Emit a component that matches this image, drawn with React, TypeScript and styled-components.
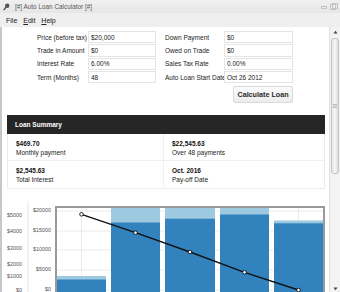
import React from "react";
import styled, { createGlobalStyle } from "styled-components";

const Global = createGlobalStyle`
  html, body { margin: 0; padding: 0; background: #fff; }
  body { font-family: "Liberation Sans", Arial, sans-serif; }
  * { box-sizing: border-box; }
`;

const Window = styled.div`
  width: 340px;
  height: 292px;
  display: flex;
  flex-direction: column;
  overflow: hidden;
  background: #ececec;
`;

const TitleBar = styled.div`
  height: 13px;
  display: flex;
  align-items: center;
  padding: 0 2px 0 3px;
  gap: 5px;
  background: linear-gradient(#f0f0f0, #e6e6e6);
  color: #5a5a5a;
  font-size: 6.4px;
`;

const TitleText = styled.span`
  flex: 1;
  white-space: nowrap;
`;

const TitleButtons = styled.div`
  display: flex;
  align-items: center;
  gap: 3px;
`;

const MenuBar = styled.div`
  height: 14px;
  display: flex;
  align-items: center;
  gap: 6px;
  padding-left: 6px;
  background: #efefef;
  font-size: 7px;
  color: #222;
`;

const MenuItem = styled.span`
  u { text-decoration: underline; }
`;

const Body = styled.div`
  flex: 1;
  display: flex;
  border-left: 2px solid #c6c9cc;
  min-height: 0;
`;

const Content = styled.div`
  flex: 1;
  background: #fff;
  display: flex;
  flex-direction: column;
  overflow: hidden;
`;

const Form = styled.div`
  display: flex;
  gap: 9px;
  padding: 4px 0 0 35px;
`;

const FieldColumn = styled.div<{ $label: number; $input: number }>`
  display: grid;
  grid-template-columns: ${(p) => p.$label}px ${(p) => p.$input}px;
  grid-auto-rows: 12.33px;
  row-gap: 1px;
  align-items: center;
`;

const Label = styled.span`
  font-size: 6.5px;
  color: #222;
  white-space: nowrap;
`;

const Field = styled.div`
  height: 100%;
  border: 1px solid #e4e4e4;
  background: #fff;
  font-size: 6.5px;
  color: #222;
  display: flex;
  align-items: center;
  padding-left: 2px;
`;

const ButtonRow = styled.div`
  display: flex;
  justify-content: flex-end;
  padding-right: 36px;
  margin-top: 2.7px;
`;

const CalcButton = styled.div`
  width: 60px;
  height: 17px;
  display: flex;
  align-items: center;
  justify-content: center;
  font-size: 7.2px;
  font-weight: bold;
  color: #2a2a2a;
  background: linear-gradient(#fbfbfb, #ececec);
  border: 1px solid #dadada;
  border-radius: 2px;
`;

const Summary = styled.div`
  margin: 12px 4px 0 5px;
`;

const SummaryHeader = styled.div`
  height: 19px;
  background: #262626;
  color: #fff;
  font-weight: bold;
  font-size: 6.5px;
  display: flex;
  align-items: center;
  padding-left: 8px;
`;

const SummaryGrid = styled.div`
  display: grid;
  grid-template-columns: 155px 1fr;
  grid-auto-rows: 26.8px;
  border: 1px solid #ececec;
  border-top: none;
`;

const Cell = styled.div<{ $right?: boolean; $bottom?: boolean }>`
  padding: 5px 8px 0;
  border-left: ${(p) => (p.$right ? "1px solid #f0f0f0" : "none")};
  border-bottom: ${(p) => (p.$bottom ? "1px solid #f0f0f0" : "none")};
  display: flex;
  flex-direction: column;
`;

const Value = styled.span`
  font-size: 6.5px;
  font-weight: bold;
  line-height: 9px;
  color: #111;
`;

const Caption = styled.span`
  font-size: 6.5px;
  line-height: 9px;
  color: #222;
`;

const ChartBox = styled.div`
  margin-top: 12px;
  height: 92px;
`;

const Scrollbar = styled.div`
  width: 11px;
  background: #f3f3f3;
  border-left: 1px solid #e0e0e0;
  display: flex;
  flex-direction: column;
  align-items: center;
  padding-top: 2px;
`;

const Arrow = styled.div`
  height: 6px;
  display: flex;
  align-items: center;
  justify-content: center;
`;

const Thumb = styled.div`
  width: 8px;
  height: 136px;
  margin-top: 3px;
  border: 1px solid #c4c4c4;
  border-radius: 3px;
  background: linear-gradient(90deg, #e6e6e6, #f6f6f6 50%, #dcdcdc);
  display: flex;
  align-items: center;
  justify-content: center;
`;

const Spacer = styled.div`
  flex: 1;
`;

const leftFields = [
  ["Price (before tax)", "$20,000"],
  ["Trade in Amount", "$0"],
  ["Interest Rate", "6.00%"],
  ["Term (Months)", "48"],
];
const rightFields = [
  ["Down Payment", "$0"],
  ["Owed on Trade", "$0"],
  ["Sales Tax Rate", "0.00%"],
  ["Auto Loan Start Date", "Oct 26 2012"],
];

const bars = [
  { x: 57, w: 49, light: 275, dark: 278.5 },
  { x: 111, w: 49, light: 207, dark: 221.5 },
  { x: 165, w: 50, light: 207, dark: 217.7 },
  { x: 220, w: 49, light: 207, dark: 213.5 },
  { x: 274, w: 49, light: 219.5, dark: 222.3 },
];
const points: [number, number][] = [
  [81.5, 213.3],
  [135.5, 231.7],
  [190, 251],
  [244.5, 271.3],
  [298.5, 289],
];
const rightAxis: [string, number][] = [
  ["$20000", 210],
  ["$15000", 230],
  ["$10000", 249],
  ["$5000", 269],
  ["$0", 289],
];
const leftAxis: [string, number][] = [
  ["$5000", 215],
  ["$4000", 231],
  ["$3000", 248],
  ["$2000", 264],
  ["$1000", 276],
  ["$0", 290],
];

const Chart = () => (
  <svg width="327" height="92" viewBox="2 200 327 92" style={{ display: "block" }}>
    <line x1="28" y1="200" x2="28" y2="292" stroke="#e4e4e4" strokeWidth="1" />
    {leftAxis.map(([t, y]) => (
      <text key={t} x="22" y={y} fontSize="5.4" fill="#555" textAnchor="end" dominantBaseline="middle" fontFamily="Liberation Sans, Arial, sans-serif">
        {t}
      </text>
    ))}
    {rightAxis.map(([t, y]) => (
      <text key={t} x="51" y={y} fontSize="5.4" fill="#555" textAnchor="end" dominantBaseline="middle" fontFamily="Liberation Sans, Arial, sans-serif">
        {t}
      </text>
    ))}
    {rightAxis.map(([t, y]) => (
      <line key={"g" + t} x1="57" y1={y} x2="323" y2={y} stroke="#e6e6e6" strokeWidth="0.8" />
    ))}
    {points.map(([x]) => (
      <line key={"v" + x} x1={x} y1="206" x2={x} y2="292" stroke="#e6e6e6" strokeWidth="0.8" />
    ))}
    {bars.map((b) => (
      <g key={b.x}>
        <rect x={b.x} y={b.light} width={b.w} height={292 - b.light} fill="#9ecae1" />
        <rect x={b.x} y={b.dark} width={b.w} height={292 - b.dark} fill="#3182bd" />
      </g>
    ))}
    <path d="M56 292 V206 H324 V292" fill="none" stroke="#9a9a9a" strokeWidth="2" />
    <polyline points={points.map((p) => p.join(",")).join(" ")} fill="none" stroke="#111" strokeWidth="1.4" />
    {points.map(([x, y]) => (
      <circle key={"c" + x} cx={x} cy={y} r="1.8" fill="#fff" stroke="#111" strokeWidth="0.9" />
    ))}
  </svg>
);

export default function App() {
  return (
    <>
      <Global />
      <Window>
        <TitleBar>
          <svg width="7" height="8" viewBox="0 0 7 8">
            <circle cx="4.2" cy="2.8" r="2.2" fill="#555" />
            <path d="M3 4 L0.8 7.2" stroke="#555" strokeWidth="1.4" />
          </svg>
          <TitleText>[#] Auto Loan Calculator [#]</TitleText>
          <TitleButtons>
            <svg width="6" height="6" viewBox="0 0 6 6">
              <rect x="0.5" y="2.5" width="5" height="2" fill="none" stroke="#bbb" strokeWidth="0.8" />
            </svg>
            <svg width="8" height="7" viewBox="0 0 8 7">
              <rect x="0.5" y="1.5" width="5" height="5" fill="none" stroke="#bbb" strokeWidth="0.8" />
              <rect x="2.5" y="0.5" width="5" height="5" fill="none" stroke="#bbb" strokeWidth="0.8" />
            </svg>
          </TitleButtons>
        </TitleBar>
        <MenuBar>
          <MenuItem>File</MenuItem>
          <MenuItem>
            <u>E</u>dit
          </MenuItem>
          <MenuItem>
            <u>H</u>elp
          </MenuItem>
        </MenuBar>
        <Body>
          <Content>
            <Form>
              <FieldColumn $label={51} $input={68}>
                {leftFields.map(([l, v]) => (
                  <React.Fragment key={l}>
                    <Label>{l}</Label>
                    <Field>{v}</Field>
                  </React.Fragment>
                ))}
              </FieldColumn>
              <FieldColumn $label={59} $input={69}>
                {rightFields.map(([l, v]) => (
                  <React.Fragment key={l}>
                    <Label>{l}</Label>
                    <Field>{v}</Field>
                  </React.Fragment>
                ))}
              </FieldColumn>
            </Form>
            <ButtonRow>
              <CalcButton>Calculate Loan</CalcButton>
            </ButtonRow>
            <Summary>
              <SummaryHeader>Loan Summary</SummaryHeader>
              <SummaryGrid>
                <Cell $bottom>
                  <Value>$469.70</Value>
                  <Caption>Monthly payment</Caption>
                </Cell>
                <Cell $right $bottom>
                  <Value>$22,545.63</Value>
                  <Caption>Over 48 payments</Caption>
                </Cell>
                <Cell>
                  <Value>$2,545.63</Value>
                  <Caption>Total Interest</Caption>
                </Cell>
                <Cell $right>
                  <Value>Oct. 2016</Value>
                  <Caption>Pay-off Date</Caption>
                </Cell>
              </SummaryGrid>
            </Summary>
            <ChartBox>
              <Chart />
            </ChartBox>
          </Content>
          <Scrollbar>
            <Arrow>
              <svg width="5" height="4" viewBox="0 0 5 4">
                <path d="M0.5 3.5 L2.5 0.8 L4.5 3.5 Z" fill="#444" />
              </svg>
            </Arrow>
            <Thumb>
              <svg width="4" height="4" viewBox="0 0 4 4">
                <path d="M0 0.5 H4 M0 2 H4 M0 3.5 H4" stroke="#999" strokeWidth="0.6" />
              </svg>
            </Thumb>
            <Spacer />
            <Arrow>
              <svg width="5" height="4" viewBox="0 0 5 4">
                <path d="M0.5 0.5 L2.5 3.2 L4.5 0.5 Z" fill="#444" />
              </svg>
            </Arrow>
          </Scrollbar>
        </Body>
      </Window>
    </>
  );
}
